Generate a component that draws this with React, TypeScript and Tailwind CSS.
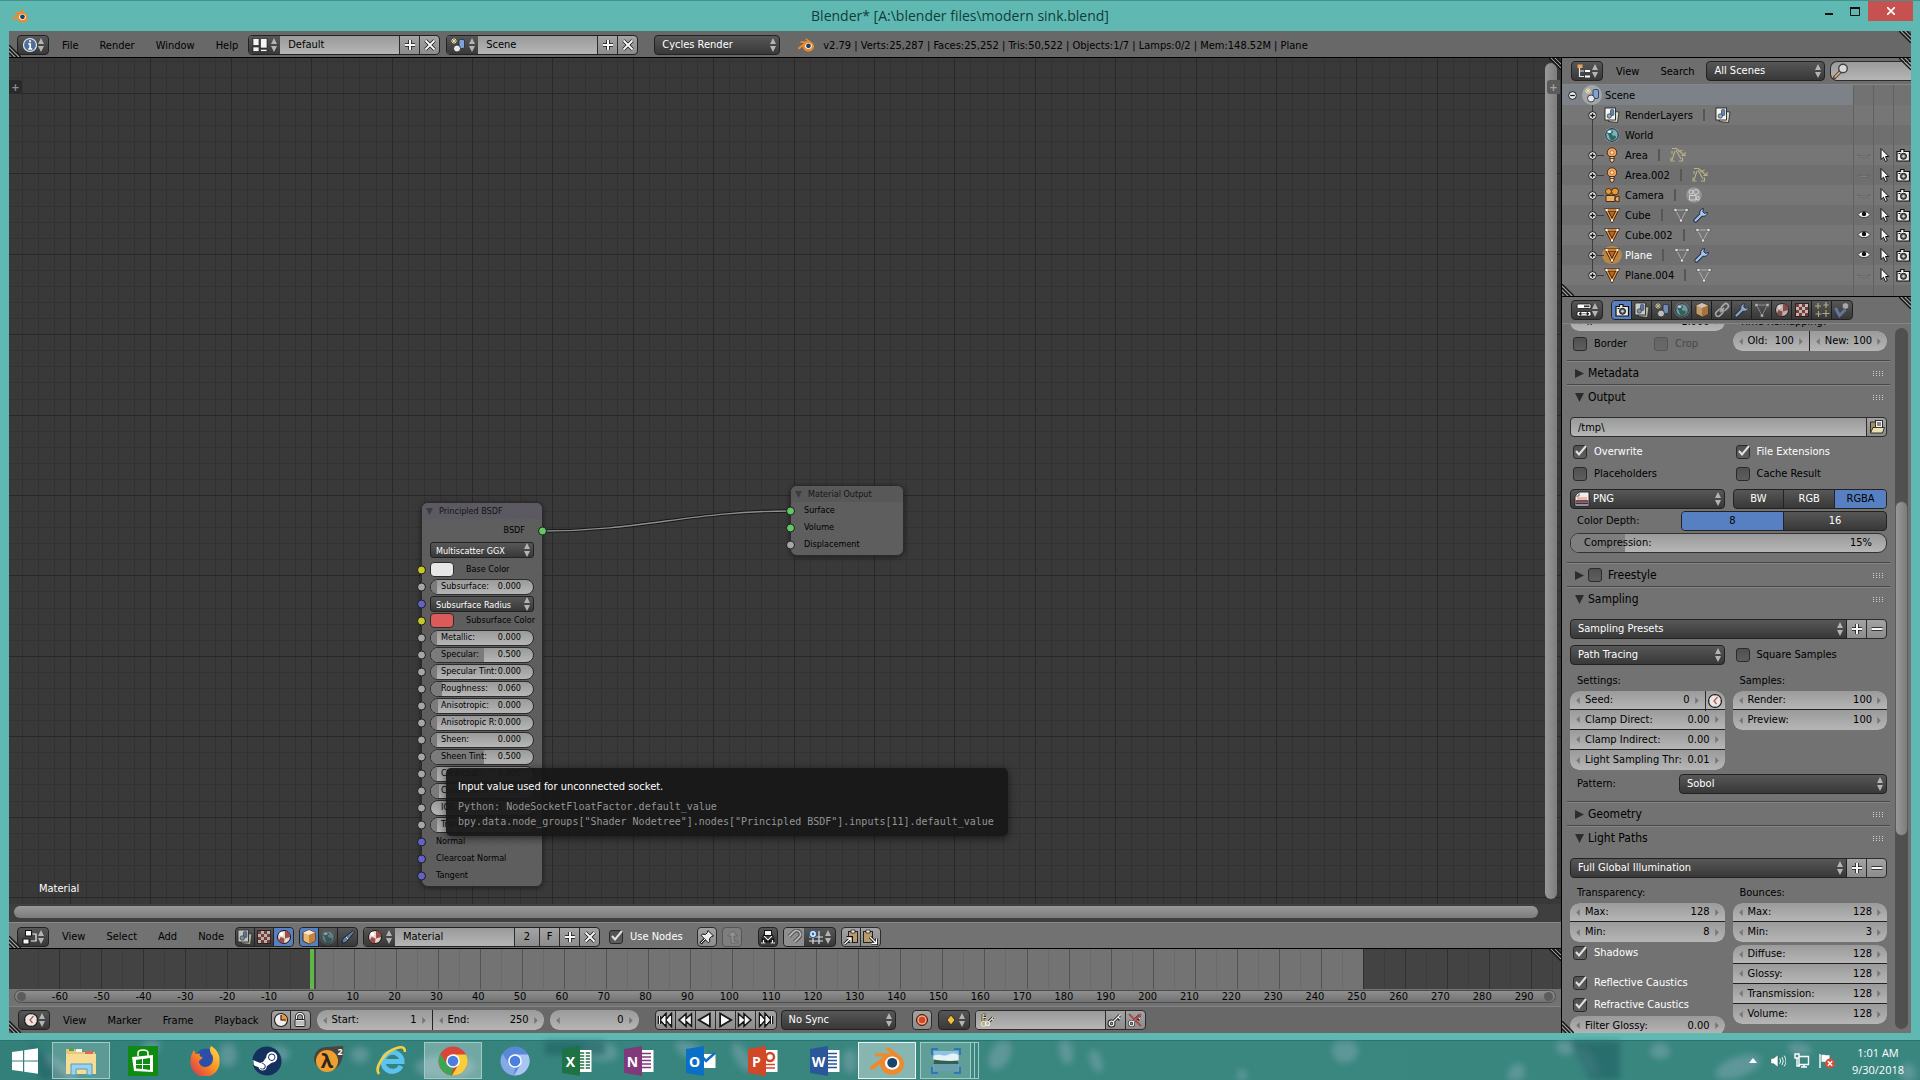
import React from "react";
import { SiBlender } from "react-icons/si";
import { FaSteam } from "react-icons/fa";

const UI = "font-['DejaVu_Sans_Condensed','DejaVu_Sans',sans-serif]";

/* ---------- icons ---------- */

const ICONS: Record<string, React.ReactNode> = {
  info: (
    <>
      <circle cx="8" cy="8" r="6.500" fill="#4f6f96" stroke="#dfe6ee" strokeWidth="1.200" />
      <path d="M8 3.300v1.900M6.200 7h2v5M6.200 12h4" stroke="#fff" strokeWidth="1.700" fill="none" />
    </>
  ),
  layout: <path d="M1 1.500h6v7H1zM1 10h6v4.500H1zM8.500 1.500H15V11H8.500zM8.500 12.300H15v2.200H8.500z" fill="#f4f4f4" stroke="#111" strokeWidth=".6" />,
  scene: (
    <>
      <path d="M4 1v6M1 4h6M2 2l4 4M6 2 2 6" stroke="#e6dfa0" strokeWidth="1" />
      <rect x="9" y="2.500" width="5.500" height="9" rx="1.500" fill="#7fa3d8" stroke="#1d2a40" strokeWidth=".8" />
      <circle cx="7" cy="11.500" r="3.500" fill="#e8e8e8" stroke="#222" strokeWidth=".8" />
    </>
  ),
  tree: (
    <>
      <path d="M3.500 4v9.500H8M3.500 8H8" stroke="#e8e8e8" strokeWidth="1.200" fill="none" />
      <rect x="1.500" y="1.500" width="5" height="3.500" fill="#e8a860" />
      <path d="M9 7h5v2H9zM9 12.500h5v2H9z" fill="#fff" />
    </>
  ),
  search: (
    <>
      <path d="M1.500 14.500 7 9" stroke="#5a3a20" strokeWidth="3.200" strokeLinecap="round" />
      <path d="M2 14 6.500 9.500" stroke="#e0b890" strokeWidth="1.600" strokeLinecap="round" />
      <circle cx="10" cy="5.500" r="4.300" fill="#d8d8d8" stroke="#444" strokeWidth="1.400" />
    </>
  ),
  layers: (
    <>
      <path d="m5 4 10 1-1.500 10.500-9-1z" fill="#d9d9c8" stroke="#222" strokeWidth=".8" />
      <rect x="1" y="1" width="10.500" height="12" fill="#f7f7ef" stroke="#222" strokeWidth=".9" />
      <rect x="6.500" y="2.500" width="3.300" height="6" rx="1" fill="#5d84bf" stroke="#234" strokeWidth=".6" />
      <circle cx="5.300" cy="9" r="2.200" fill="#9ab" stroke="#234" strokeWidth=".7" />
    </>
  ),
  world: (
    <>
      <circle cx="8" cy="8" r="7.600" fill="#8fa8b5" opacity=".7" />
      <circle cx="8" cy="8" r="6.300" fill="#7fb0c4" stroke="#16242e" strokeWidth="1" />
      <path d="M3 6c2-3 5-3 6-2s-2 3-1 4 4 0 4 2-3 4-5 3-1-4-4-7Z" fill="#2f6b5c" />
      <ellipse cx="5.500" cy="4.800" rx="2" ry="1.200" fill="#e4f3f6" />
    </>
  ),
  lamp: (
    <>
      <circle cx="8" cy="5.500" r="4.700" fill="#f0a860" stroke="#442408" strokeWidth=".9" />
      <circle cx="8" cy="5.500" r="1.900" fill="#fde3c0" stroke="#b06a28" strokeWidth=".8" />
      <path d="M6 9.500h4v4.500l-2 1.500-2-1.500z" fill="#e9d0b0" stroke="#442408" strokeWidth=".9" />
      <path d="M6 11.500h4" stroke="#442408" strokeWidth=".8" />
    </>
  ),
  lampData: (
    <g stroke="#b9b384" fill="none" strokeWidth="1.100">
      <path d="M2 1.500h5M7 2l7 6M6 3l5 9M5 4l-3 9M2 4v3" />
      <path d="M1 10.500v3.500h3.500M9 14h3.500v-3.500M11.500 8.500H15V5M8.500 5l4-2" />
    </g>
  ),
  camera: (
    <>
      <circle cx="4.500" cy="4.500" r="3" fill="#e8963c" stroke="#3c2206" strokeWidth=".9" />
      <circle cx="11" cy="4.500" r="3.500" fill="#e8963c" stroke="#3c2206" strokeWidth=".9" />
      <path d="M2 8.500h9v6H2zM11 10.500l4-1.500v6l-4-1.500z" fill="#efae66" stroke="#3c2206" strokeWidth=".9" />
    </>
  ),
  cameraData: (
    <>
      <circle cx="8" cy="8" r="7.800" fill="#959595" />
      <g fill="none" stroke="#d8d8d8" strokeWidth=".9">
        <circle cx="5" cy="5" r="2" />
        <circle cx="10" cy="5" r="2.500" />
        <path d="M3.500 8.500h6.500v4.500H3.500zM10 10.300l3-1v4l-3-1z" />
      </g>
    </>
  ),
  mesh: (
    <>
      <path d="M2.500 3h11L8 13.500z" fill="#b5682a" stroke="#3c2206" strokeWidth="3" />
      <path d="M2.500 3h11L8 13.500z" fill="none" stroke="#f3a052" strokeWidth="1.300" />
      <path d="M1.500 2h2v2h-2zM12.500 2h2v2h-2zM7 12.500h2v2H7z" fill="#fff" />
    </>
  ),
  meshData: (
    <>
      <path d="M2.500 3h11L8 13.500z" fill="none" stroke="#c6c6c6" strokeWidth="1" opacity=".7" />
      <path d="M1 1.500h3v3H1zM12 1.500h3v3h-3zM6.500 12h3v3h-3z" fill="#dcdcdc" stroke="#444" strokeWidth=".5" />
    </>
  ),
  wrench: (
    <>
      <path d="M2.500 13.500 9 7" stroke="#1c2c48" strokeWidth="4.200" strokeLinecap="round" />
      <path d="M14.500 5.500A4 4 0 0 1 8 8.500 4 4 0 0 1 10.500 1.500L9.800 4.800l1.500 1.500z" fill="#a9c4ee" stroke="#1c2c48" strokeWidth="1" />
      <path d="M2.500 13.500 9.500 6.500" stroke="#a9c4ee" strokeWidth="2.300" strokeLinecap="round" />
    </>
  ),
  eye: (
    <>
      <path d="M2 7.500c3-4 9-4 12 0-2.500 4.200-9.500 4.200-12 0Z" fill="#f2f2f2" stroke="#2a2a2a" strokeWidth=".9" />
      <circle cx="8" cy="7" r="2.200" fill="#111" />
    </>
  ),
  eyeClosed: <path d="M2 7.500c3 2 9 2 12 0-2 4-10 4.500-12 0Z" fill="#8e8e8e" stroke="#5a5a5a" strokeWidth=".7" />,
  cursor: <path d="M5 1.500v11l2.500-2.300 1.800 4.300 2-.9-1.800-4.100h3.300z" fill="#f4f4f4" stroke="#111" strokeWidth="1" />,
  photo: (
    <>
      <path d="M2 4.500h3.500V2.500h3.500v2h5.500V14H2z" fill="#e9e9e9" stroke="#111" strokeWidth="1.200" />
      <circle cx="8.500" cy="9.300" r="3" fill="#666" stroke="#111" strokeWidth="1" />
      <circle cx="8.500" cy="9.300" r="1.200" fill="#d5d5d5" />
      <path d="M3.500 6.500h2" stroke="#111" />
    </>
  ),
  props: (
    <>
      <rect x="1" y="2" width="14" height="4.500" rx="1.500" fill="#fff" stroke="#111" strokeWidth=".8" />
      <path d="M8 4.300h5.500" stroke="#333" strokeWidth="1.800" />
      <rect x="1" y="9.500" width="14" height="4.500" rx="1.500" fill="#fff" stroke="#111" strokeWidth=".8" />
      <path d="M5 10.200 3 11.800l2 1.500zM11 10.200l2 1.600-2 1.500zM5 11.800h6" fill="#111" stroke="#111" strokeWidth=".6" />
    </>
  ),
  cube: (
    <>
      <path d="m8 1 6 2.500v8.500l-6 3-6-3V3.500z" fill="#e8b878" stroke="#3c2206" strokeWidth=".9" />
      <path d="m8 1 6 2.500L8 6 2 3.500z" fill="#fbe9cf" />
      <path d="M8 6v9l6-3V3.500z" fill="#c88238" />
    </>
  ),
  link: (
    <g transform="rotate(-45 8 8)" fill="none" stroke="#c5c5c5" strokeWidth="1.700">
      <rect x="0" y="5.500" width="8" height="5" rx="2.500" />
      <rect x="8" y="5.500" width="8" height="5" rx="2.500" />
      <path d="M5 8h6" />
    </g>
  ),
  material: (
    <>
      <circle cx="8" cy="8" r="6.500" fill="#e6d5d2" stroke="#1a1010" strokeWidth="1" />
      <path d="M9 1.800A6.300 6.300 0 0 1 14.200 8L9 9.500zM8.500 9.500 8 14.300A6.300 6.300 0 0 1 2.800 11.500L4.500 8z" fill="#9c4e46" />
      <ellipse cx="5.500" cy="5" rx="2.200" ry="1.900" fill="#fff" />
    </>
  ),
  checker: (
    <>
      <rect x="1.500" y="1.500" width="13" height="13" fill="#eadfda" stroke="#2a1512" strokeWidth="1" />
      <path d="M2 2h3v3H2zM8 2h3v3H8zM5 5h3v3H5zM11 5h3v3h-3zM2 8h3v3H2zM8 8h3v3H8zM5 11h3v3H5zM11 11h3v3h-3z" fill="#8b3a34" />
    </>
  ),
  particles: <path d="M4 1v6M1 4h6M12 0v6M9.500 3h5M4.500 9v6M1.500 12h6M12 8v7M8.500 11.500h7" stroke="#d9cd9a" strokeWidth="1.100" />,
  physics: (
    <>
      <path d="m1.500 6 4 7.500 6-6" stroke="#6c87bd" strokeWidth="3" fill="none" />
      <circle cx="11.500" cy="4" r="3.300" fill="#c5c5cf" stroke="#333" strokeWidth=".6" />
    </>
  ),
  folder: (
    <>
      <path d="M1.500 3h5l1 1.500h6v9h-12z" fill="#a58f55" stroke="#222" strokeWidth=".9" />
      <rect x="6.500" y="1.500" width="7" height="8" fill="#f5f5f5" stroke="#222" strokeWidth=".9" />
      <path d="M8 4h4M8 6h4" stroke="#222" />
      <path d="M1.500 14 4 8.500h11.500l-2 5.500z" fill="#eadfae" stroke="#222" strokeWidth=".9" />
    </>
  ),
  image: (
    <>
      <path d="M5 1h10v14H1V5z" fill="#f3ebe6" stroke="#222" strokeWidth=".9" />
      <path d="M1 5h4V1z" fill="#fff" stroke="#222" strokeWidth=".7" />
      <path d="M3 6h10v3H3z" fill="#e2bcb0" />
      <path d="M1.500 9h13v2.500h-13z" fill="#8a4a4a" />
      <path d="M1.500 11.500h13v2h-13z" fill="#31345e" />
    </>
  ),
  clock: (
    <>
      <circle cx="8" cy="8" r="6.500" fill="#efe6e4" stroke="#1b1b1b" strokeWidth="1.100" />
      <path d="M10.500 4 7 8l2.500 3" stroke="#a8554d" strokeWidth="1.200" fill="none" />
      <path d="M8 2v1M8 13v1M2 8h1M13 8h1" stroke="#555" strokeWidth=".8" />
    </>
  ),
  clockOrange: (
    <>
      <circle cx="8" cy="8" r="6.500" fill="#f2eeee" stroke="#1b1b1b" strokeWidth="1.100" />
      <path d="M8 8V2a6 6 0 0 1 5.500 8z" fill="#e8953c" />
      <path d="M8 3v5h4.500" stroke="#222" strokeWidth="1.200" fill="none" />
    </>
  ),
  lock: (
    <>
      <path d="M4.500 8V5a3.500 3.500 0 0 1 7 0v3" fill="none" stroke="#222" strokeWidth="3" />
      <path d="M4.500 8V5a3.500 3.500 0 0 1 7 0v3" fill="none" stroke="#f2f2f2" strokeWidth="1.300" />
      <rect x="3" y="7.500" width="10" height="7" rx="1" fill="#e2e2e2" stroke="#222" strokeWidth="1" />
      <path d="M4 10h8M4 12h8" stroke="#888" strokeWidth=".8" />
    </>
  ),
  nodes: (
    <>
      <rect x="3.500" y="1.500" width="6" height="5.500" fill="#f4f4f4" stroke="#111" />
      <rect x="1" y="10" width="6" height="5" fill="#f4f4f4" stroke="#111" />
      <path d="M10.500 5h3.500v7H9" stroke="#f4f4f4" strokeWidth="1.200" fill="none" />
    </>
  ),
  brush: (
    <>
      <path d="M2 14c0-3 1-5 3-6l8-6.500 1.500 1.500L8 11c-1.500 2-3 3-6 3Z" fill="#5a7fa6" stroke="#111" strokeWidth=".8" />
      <path d="m6 8 2 2" stroke="#ddd" />
    </>
  ),
  pin: (
    <>
      <path d="M1.500 14.500 6 10" stroke="#111" strokeWidth="2.600" />
      <path d="m9 1.500 5.500 5.500-2 .5-2 2 .3 3-1.500 1.200-7-7L3.500 5l3 .5 2-2z" fill="#ececec" stroke="#111" strokeWidth="1" />
      <path d="M2 14 6 10" stroke="#fff" strokeWidth="1" />
    </>
  ),
  parent: <path d="M7 14V7H3.500L8.500 2l5 5H10v5h4v2z" fill="#929292" stroke="#666" strokeWidth="1" />,
  autoOffset: (
    <>
      <path d="M3 6.500 8 11l5-4.500M3 15v-4l2.500 2L8 11l2.500 2 2.500-2v4" fill="none" stroke="#111" strokeWidth="2.600" />
      <path d="M4 7 8 11l4-4M1 14h4.500M10.500 14H15M3.500 11v3M12.500 11v3" fill="none" stroke="#eee" strokeWidth="1.200" />
      <rect x="4.500" y="1.500" width="7" height="5" fill="#f2f2f2" stroke="#111" />
    </>
  ),
  magnet: (
    <>
      <path d="M3 7.500 8 2.500a3.900 3.900 0 0 1 5.500 5.500l-5 5" fill="none" stroke="#444" strokeWidth="3.600" />
      <path d="M3 7.500 8 2.500a3.900 3.900 0 0 1 5.500 5.500l-5 5" fill="none" stroke="#b5b5b5" strokeWidth="1.800" />
    </>
  ),
  snapGrid: (
    <>
      <path d="M5 4v11M11 2v13M1 8h14M1 12h14" stroke="#e0e0e0" strokeWidth="1.200" />
      <circle cx="5" cy="5" r="3.500" fill="#e9f1fa" stroke="#2e5d96" strokeWidth="1.200" />
      <circle cx="5" cy="5" r="1.400" fill="#2f6cb5" />
    </>
  ),
  copy: (
    <>
      <rect x="5.500" y="2.500" width="9" height="11" fill="#b89a6c" stroke="#222" />
      <path d="M8 1h4v3H8z" fill="#eee" stroke="#222" strokeWidth=".8" />
      <path d="m1.500 15 5-5M3.500 8.500h5v5" fill="none" stroke="#111" strokeWidth="3" />
      <path d="m1.500 15 6.500-6M3.500 9h4.500v4.500" fill="none" stroke="#fff" strokeWidth="1.400" />
    </>
  ),
  paste: (
    <>
      <rect x="1.500" y="2.500" width="9" height="11" fill="#b89a6c" stroke="#222" />
      <path d="M4 1h4v3H4z" fill="#eee" stroke="#222" strokeWidth=".8" />
      <path d="m8 8 6 6M9.500 14.500h5v-5" fill="none" stroke="#111" strokeWidth="3" />
      <path d="m8 8 6 6M9.500 14.500h5v-5" fill="none" stroke="#fff" strokeWidth="1.300" />
    </>
  ),
  plus: <path d="M8 3v10M3 8h10" stroke="#f6f6f6" strokeWidth="2" />,
  cross: <path d="m3.500 3.500 9 9M12.500 3.500l-9 9" stroke="#f6f6f6" strokeWidth="2" />,
  minus: <path d="M2.500 8h11" stroke="#f6f6f6" strokeWidth="2" />,
  first: <path d="M2.500 4v8M8 4 4.500 8 8 12zM13.500 4 10 8l3.500 4z" fill="#f6f6f6" stroke="#f6f6f6" strokeWidth="1" />,
  rewind: <path d="M8 4 3.500 8 8 12zM13.500 4 9 8l4.500 4z" fill="#f6f6f6" stroke="#f6f6f6" strokeWidth=".6" />,
  playBack: <path d="M12 3 3.500 8l8.500 5z" fill="#f6f6f6" />,
  play: <path d="M4 3 12.500 8 4 13z" fill="#f6f6f6" />,
  forward: <path d="M8 4l4.500 4L8 12zM2.500 4 7 8l-4.500 4z" fill="#f6f6f6" stroke="#f6f6f6" strokeWidth=".6" />,
  last: <path d="M13.500 4v8M8 4l3.500 4L8 12zM2.500 4 6 8l-3.500 4z" fill="#f6f6f6" stroke="#f6f6f6" strokeWidth="1" />,
  record: (
    <>
      <circle cx="8" cy="8" r="5.500" fill="#dc6a42" stroke="#4a160a" strokeWidth="1" />
      <circle cx="8" cy="8" r="4" fill="#cf4a24" stroke="#f6c4a8" strokeWidth=".9" />
    </>
  ),
  diamond: <path d="m8 3 4 5-4 5-4-5z" fill="#f0bd48" stroke="#3a2c08" strokeWidth=".9" />,
  keySet: (
    <>
      <path d="M4 2v9M4 3h3M4 5.500h3" stroke="#222" strokeWidth="2.600" />
      <path d="m9 10.500 5-5" stroke="#222" strokeWidth="3" />
      <path d="M4 2v9M4 3h3M4 5.500h3M9 10.500l5-5M12.500 6l2 2" stroke="#f0e6b0" strokeWidth="1.200" />
      <circle cx="4.500" cy="12" r="2.300" fill="none" stroke="#e8d98e" strokeWidth="1.300" />
      <circle cx="8.500" cy="11.500" r="2" fill="none" stroke="#f0f0f0" strokeWidth="1.200" />
    </>
  ),
  key: (
    <>
      <path d="m6 10 7-7M10 5l3 3" stroke="#222" strokeWidth="3" />
      <circle cx="4.500" cy="11.500" r="2.500" fill="none" stroke="#222" strokeWidth="3" />
      <path d="m6 10 7.500-7.500M11 5l2.500 2.500" stroke="#eee" strokeWidth="1.300" />
      <circle cx="4.500" cy="11.500" r="2.300" fill="none" stroke="#eee" strokeWidth="1.300" />
    </>
  ),
  keyDel: (
    <>
      <path d="m6 10 7-7M10 5l3 3" stroke="#222" strokeWidth="3" />
      <circle cx="4.500" cy="11.500" r="2.300" fill="none" stroke="#222" strokeWidth="2.600" />
      <path d="m6 10 7.500-7.500M11 5l2.500 2.500" stroke="#eee" strokeWidth="1.300" />
      <circle cx="4.500" cy="11.500" r="2.300" fill="none" stroke="#eee" strokeWidth="1.300" />
      <path d="m2 2 12 12M14 2 9 7" stroke="#b04545" strokeWidth="1.800" />
    </>
  ),
};

const OUTLINED = ["plus", "cross", "minus", "first", "rewind", "playBack", "play", "forward", "last"];

function Icon({ name }: { name: string }) {
  return (
    <svg viewBox="0 0 16 16" width="16" height="16" className="shrink-0" aria-hidden="true">
      {OUTLINED.includes(name) && (
        <g className="[&_path]:stroke-[#161616] [&_path]:[stroke-width:3.5] [&_path]:fill-[#161616]">{ICONS[name]}</g>
      )}
      {ICONS[name]}
    </svg>
  );
}

function BlenderLogo({ size }: { size: number }) {
  return (
    <svg viewBox="0 0 24 24" width={size} height={size} className="shrink-0" aria-hidden="true">
      <circle cx="15.700" cy="13.500" r="6" fill="#fff" />
      <SiBlender size={24} color="#ef8a2c" />
      <circle cx="15.700" cy="13.300" r="3.500" fill="#16466f" />
    </svg>
  );
}

/* ---------- basic widgets ---------- */

function UpDown({ className = "" }: { className?: string }) {
  return (
    <svg viewBox="0 0 8 14" width="6" height="14" preserveAspectRatio="none" className={`pointer-events-none shrink-0 ${className}`} aria-hidden="true">
      <path d="M4 0 8 6H0zM4 14 8 8H0z" fill="#b4b4b4" />
    </svg>
  );
}

const DARK = "bg-linear-to-b from-[#575757] to-[#383838] border border-[#222222]";
const LIGHT = "bg-linear-to-b from-[#a3a3a3] to-[#8c8c8c] border border-[#2c2c2c]";
const NUM = "bg-linear-to-b from-[#9a9a9a] to-[#b6b6b6]";

function EditorButton({ icon, label }: { icon: string; label: string }) {
  return (
    <button aria-label={label} className={`flex h-5 w-8 shrink-0 items-center justify-between rounded px-1 ${DARK}`}>
      <Icon name={icon} />
      <UpDown />
    </button>
  );
}

function Menus({ items }: { items: string[] }) {
  return (
    <nav className="ml-[3px] flex gap-px">
      {items.map((item) => (
        <button key={item} className="px-[10px] pt-[2px] text-black">{item}</button>
      ))}
    </nav>
  );
}

function Dropdown({ value, label, className = "", selectClass = "pl-[7px]" }: { value: string; label: string; className?: string; selectClass?: string }) {
  return (
    <div className={`relative flex h-5 items-center ${DARK} ${className}`}>
      <select aria-label={label} className={`h-full w-full appearance-none bg-transparent pt-px pr-3 text-white outline-none ${selectClass}`}>
        <option>{value}</option>
      </select>
      <UpDown className="absolute right-[3px]" />
    </div>
  );
}

function IconButton({ icon, label, className = "" }: { icon: string; label: string; className?: string }) {
  return (
    <button aria-label={label} className={`flex h-5 w-5 shrink-0 items-center justify-center ${className}`}>
      <Icon name={icon} />
    </button>
  );
}

function DataBlock({ icon, value, label, children }: { icon: string; value: string; label: string; children?: React.ReactNode }) {
  return (
    <div className="flex h-5 overflow-hidden rounded border border-[#222222] bg-linear-to-b from-[#a3a3a3] to-[#8c8c8c]">
      <button aria-label={`Browse ${label}`} className="flex w-[31px] items-center justify-between bg-linear-to-b from-[#575757] to-[#383838] px-[3px]">
        <Icon name={icon} />
        <UpDown />
      </button>
      <input aria-label={label} defaultValue={value} className={`w-[119px] px-2 pt-px text-black outline-none ${NUM}`} />
      {children}
    </div>
  );
}

function Arrow({ right }: { right?: boolean }) {
  return (
    <svg viewBox="0 0 4 8" width="4" height="7" className="shrink-0" aria-hidden="true">
      <path d={right ? "M0 0l4 4-4 4z" : "M4 0 0 4l4 4z"} fill="#767676" />
    </svg>
  );
}

function NumField({ label, value, className = "", children }: { label: string; value: string; className?: string; children?: React.ReactNode }) {
  return (
    <div className={`flex h-5 min-w-0 ${NUM} ${className}`}>
      <label className="flex min-w-0 flex-1 items-center px-[6px] text-black">
        <Arrow />
        <span className="pt-px pl-[5px] whitespace-nowrap">{label}</span>
        <input defaultValue={value} aria-label={label || "Current frame"} className="min-w-0 flex-1 bg-transparent pt-px pr-[5px] text-right outline-none" />
        <Arrow right />
      </label>
      {children}
    </div>
  );
}

function FieldStack({ children }: { children: React.ReactNode }) {
  return (
    <div className="divide-y divide-[#222222] overflow-hidden rounded-[9px] ring-1 ring-[#333333] ring-inset [&>:first-child]:h-[19px]">
      {children}
    </div>
  );
}

function Check({ label, checked, disabled, className = "" }: { label: string; checked?: boolean; disabled?: boolean; className?: string }) {
  const tone = disabled ? "text-[#494949]" : checked ? "text-white" : "text-black";
  return (
    <label className={`flex h-[22px] items-center gap-[7px] pl-[3px] ${tone} ${className}`}>
      <span className={`relative flex h-[14px] w-[14px] ${disabled ? "opacity-40" : ""}`}>
        <input
          type="checkbox"
          defaultChecked={checked}
          disabled={disabled}
          className="peer h-[14px] w-[14px] appearance-none rounded-[3px] border border-[#2a2a2a] bg-linear-to-b from-[#505050] to-[#5e5e5e]"
        />
        <svg viewBox="0 0 14 14" width="14" height="14" className="pointer-events-none absolute inset-0 hidden overflow-visible peer-checked:block" aria-hidden="true">
          <path d="M3 6 6 9.500 13 1" fill="none" stroke="#e2e2e2" strokeWidth="2" />
        </svg>
      </span>
      <span className="pt-px">{label}</span>
    </label>
  );
}

function Corner({ className }: { className: string }) {
  return (
    <svg viewBox="0 0 12 12" width="12" height="12" className={`pointer-events-none absolute ${className}`} aria-hidden="true">
      <path d="M0 0 12 12M4 0l8 8M8 0l4 4" stroke="#161616" strokeWidth="1.300" />
      <path d="m2 0 10 10M6 0l6 6" stroke="#a5a5a5" strokeWidth=".9" />
    </svg>
  );
}

/* ---------- window chrome ---------- */

function TitleBar() {
  return (
    <header className="grid h-[31px] shrink-0 grid-cols-[1fr_auto_1fr] border-t border-[#44908b]">
      <div className="flex items-center pl-3"><BlenderLogo size={16} /></div>
      <h1 className="pt-1 font-['Open_Sans',sans-serif] text-[14px] leading-[22px] text-[#123c3a]">Blender* [A:\blender files\modern sink.blend]</h1>
      <div className="flex justify-end pr-[7px]">
        <button aria-label="Minimize" className="flex h-5 w-[26px] items-center justify-center">
          <svg width="10" height="10" viewBox="0 0 10 10"><path d="M1 7h8v2H1z" fill="#111" /></svg>
        </button>
        <button aria-label="Maximize" className="flex h-5 w-[26px] items-center justify-center">
          <svg width="10" height="9" viewBox="0 0 10 9"><path d="M.5 1h9v7.500h-9z" fill="none" stroke="#111" /><path d="M0 0h10v2H0z" fill="#111" /></svg>
        </button>
        <button aria-label="Close" className="flex h-5 w-[45px] items-center justify-center bg-[#c75050]">
          <svg width="8" height="8" viewBox="0 0 8 8"><path d="m0 0 8 8M8 0 0 8" stroke="#fff" strokeWidth="1.600" /></svg>
        </button>
      </div>
    </header>
  );
}

function InfoBar() {
  return (
    <div className="relative flex h-[27px] shrink-0 items-center border-b border-black bg-[#686868] pt-[2px] pl-2">
      <Corner className="bottom-0 left-0 rotate-180" />
      <Corner className="top-0 right-0" />
      <EditorButton icon="info" label="Editor type: Info" />
      <Menus items={["File", "Render", "Window", "Help"]} />
      <div className="flex gap-[6px]">
        <DataBlock icon="layout" value="Default" label="Screen layout">
          <IconButton icon="plus" label="Add screen" className="h-[18px] border-l border-[#2c2c2c]" />
          <IconButton icon="cross" label="Delete screen" className="h-[18px] border-l border-[#2c2c2c]" />
        </DataBlock>
        <DataBlock icon="scene" value="Scene" label="Scene">
          <IconButton icon="plus" label="Add scene" className="h-[18px] border-l border-[#2c2c2c]" />
          <IconButton icon="cross" label="Delete scene" className="h-[18px] border-l border-[#2c2c2c]" />
        </DataBlock>
      </div>
      <Dropdown value="Cycles Render" label="Render engine" className="ml-4 w-[126px] rounded" />
      <div className="ml-[18px] flex items-center gap-[9px] whitespace-nowrap text-black">
        <BlenderLogo size={16} />
        <span className="pt-[2px]">v2.79 | Verts:25,287 | Faces:25,252 | Tris:50,522 | Objects:1/7 | Lamps:0/2 | Mem:148.52M | Plane</span>
      </div>
    </div>
  );
}

/* ---------- node editor ---------- */

const GRID_STEP = 80.4 / 5;

function NodeGrid() {
  const lines = (count: number, origin: number) =>
    Array.from({ length: count }, (_, i) => ({ pos: Math.round(origin + (i - 5) * GRID_STEP), major: i % 5 === 0 }));
  const vertical = lines(110, 61);
  const horizontal = lines(60, 35);
  const draw = (major: boolean) => (
    <g stroke={major ? "#282828" : "#323232"} strokeWidth="1" shapeRendering="crispEdges">
      {vertical.filter((l) => l.major === major).map((l) => <line key={`v${l.pos}`} x1={l.pos + 0.5} x2={l.pos + 0.5} y1="0" y2="100%" />)}
      {horizontal.filter((l) => l.major === major).map((l) => <line key={`h${l.pos}`} y1={l.pos + 0.5} y2={l.pos + 0.5} x1="0" x2="100%" />)}
    </g>
  );
  return (
    <svg className="block h-full w-full bg-[#393939]" aria-hidden="true">
      {draw(false)}
      {draw(true)}
    </svg>
  );
}

function Socket({ color, side = "left" }: { color: string; side?: "left" | "right" }) {
  return (
    <span
      className={`absolute top-1/2 h-[9px] w-[9px] -translate-y-1/2 rounded-full border border-[#1c1c1c] ${side === "left" ? "-left-[5px]" : "-right-[5px]"}`}
      style={{ backgroundColor: color }}
    />
  );
}

const GREY = "#a6a6a6";
const YELLOW = "#c7c729";
const BLUE = "#6363c7";
const GREEN = "#63c763";

const SLIDERS: { label: string; value: string; fill: number }[] = [
  { label: "Metallic:", value: "0.000", fill: 6 },
  { label: "Specular:", value: "0.500", fill: 52 },
  { label: "Specular Tint:", value: "0.000", fill: 6 },
  { label: "Roughness:", value: "0.060", fill: 11 },
  { label: "Anisotropic:", value: "0.000", fill: 7 },
  { label: "Anisotropic R:", value: "0.000", fill: 6 },
  { label: "Sheen:", value: "0.000", fill: 6 },
  { label: "Sheen Tint:", value: "0.500", fill: 52 },
  { label: "Clearcoat:", value: "0.000", fill: 6 },
  { label: "Clearcoat R:", value: "0.030", fill: 8 },
  { label: "IOR:", value: "1.450", fill: 0 },
  { label: "Transmission:", value: "0.000", fill: 6 },
];

function NodeRow({ color, children }: { color: string; children: React.ReactNode }) {
  return (
    <div className="relative flex h-[17px] items-center px-2">
      <Socket color={color} />
      {children}
    </div>
  );
}

function NodeSlider({ label, value, fill }: { label: string; value: string; fill: number }) {
  return (
    <label className={`relative flex h-[16px] w-full items-center overflow-hidden rounded-[8px] border border-[#2c2c2c] pr-3 pl-[10px] ${NUM}`}>
      <span className="absolute inset-y-0 left-0 bg-[#7b7b7b]" style={{ width: `${fill}%` }} />
      <span className="relative whitespace-nowrap">{label}</span>
      <input defaultValue={value} aria-label={label} className="relative min-w-0 flex-1 bg-transparent text-right outline-none" />
    </label>
  );
}

function NodeTitle({ children, tint }: { children: string; tint: string }) {
  return (
    <div className={`flex h-4 items-center gap-[6px] rounded-t-[6px] pl-[4px] text-[#141414] ${tint}`}>
      <svg viewBox="0 0 8 8" width="7" height="7" aria-hidden="true"><path d="M0 0h8L4 8z" fill="#3c3c3c" /></svg>
      <span>{children}</span>
    </div>
  );
}

function PrincipledNode() {
  return (
    <section className="absolute top-[444px] left-[412px] w-[122px] rounded-[7px] border border-[#2b2b2b] bg-[#606060]/95 pb-[2px] text-[9px] leading-[15px] text-black shadow-[0_1px_5px_rgba(0,0,0,0.5)]">
      <NodeTitle tint="bg-[#5c5962]">Principled BSDF</NodeTitle>
      <div className="relative flex h-[23px] items-center justify-end pr-[17px]">
        BSDF
        <Socket color={GREEN} side="right" />
      </div>
      <div className="mb-[3px] flex px-2">
        <Dropdown value="Multiscatter GGX" label="Distribution" className="h-[16px] w-full rounded-[3px]" selectClass="pl-[5px]" />
      </div>
      <NodeRow color={YELLOW}>
        <button aria-label="Base Color" className="h-[15px] w-6 rounded border border-[#2c2c2c] bg-[#e7e7e7]" />
        <span className="pl-3 whitespace-nowrap">Base Color</span>
      </NodeRow>
      <NodeRow color={GREY}><NodeSlider label="Subsurface:" value="0.000" fill={6} /></NodeRow>
      <NodeRow color={BLUE}>
        <Dropdown value="Subsurface Radius" label="Subsurface Radius" className="h-[16px] w-full rounded-[3px]" selectClass="pl-[5px]" />
      </NodeRow>
      <NodeRow color={YELLOW}>
        <button aria-label="Subsurface Color" className="h-[15px] w-6 shrink-0 rounded border border-[#2c2c2c] bg-[#dc5a5a]" />
        <span className="pl-3 whitespace-nowrap">Subsurface Color</span>
      </NodeRow>
      {SLIDERS.map((s) => (
        <NodeRow key={s.label} color={GREY}><NodeSlider {...s} /></NodeRow>
      ))}
      {["Normal", "Clearcoat Normal", "Tangent"].map((name) => (
        <NodeRow key={name} color={BLUE}><span className="pl-[6px]">{name}</span></NodeRow>
      ))}
    </section>
  );
}

function OutputNode() {
  return (
    <section className="absolute top-[427px] left-[781px] w-[114px] rounded-[7px] border border-[#2b2b2b] bg-[#606060]/95 pb-[2px] text-[9px] leading-[15px] text-black shadow-[0_1px_5px_rgba(0,0,0,0.5)]">
      <NodeTitle tint="bg-[#585858]">Material Output</NodeTitle>
      <NodeRow color={GREEN}><span className="pl-[5px]">Surface</span></NodeRow>
      <NodeRow color={GREEN}><span className="pl-[5px]">Volume</span></NodeRow>
      <NodeRow color={GREY}><span className="pl-[5px]">Displacement</span></NodeRow>
    </section>
  );
}

function NodeCanvas() {
  return (
    <div className="relative min-h-0 flex-1 overflow-hidden bg-[#3f3f3f] pb-[18px]">
      <NodeGrid />
      <svg className="pointer-events-none absolute inset-0 h-full w-full" aria-hidden="true">
        <path d="M534 473C633 473 682 453 781 453" fill="none" stroke="#181818" strokeWidth="3.500" />
        <path d="M534 473C633 473 682 453 781 453" fill="none" stroke="#8e8e8e" strokeWidth="1.300" />
      </svg>
      <PrincipledNode />
      <OutputNode />
      <div role="tooltip" className="absolute top-[710px] left-[437px] rounded-[5px] bg-[#171717]/95 pt-[11px] pr-[14px] pb-[7px] pl-3 shadow-[0_2px_8px_rgba(0,0,0,0.6)]">
        <p className="h-5 text-[11px] leading-4 text-white">Input value used for unconnected socket.</p>
        <p className="font-['DejaVu_Sans_Mono',monospace] text-[10px] leading-[15px] whitespace-nowrap text-[#959595]">Python: NodeSocketFloatFactor.default_value</p>
        <p className="font-['DejaVu_Sans_Mono',monospace] text-[10px] leading-[15px] whitespace-nowrap text-[#959595]">bpy.data.node_groups["Shader Nodetree"].nodes["Principled BSDF"].inputs[11].default_value</p>
      </div>
      <span className="absolute bottom-[25px] left-[30px] text-[11px] text-white">Material</span>
      <button aria-label="Show tool shelf" className="absolute top-[22px] left-0 h-[14px] w-[13px] rounded-r-[3px] bg-[#2a2a2a] text-[11px] leading-[13px] font-bold text-[#8e8e8e]">+</button>
      <div className="absolute top-[5px] right-1 bottom-[23px] w-3 rounded-full bg-linear-to-r from-[#999999] to-[#7c7c7c]" />
      <button aria-label="Show properties" className="absolute top-[22px] right-[1px] h-[14px] w-[13px] rounded-l-[3px] bg-[#5b5b5b] text-[11px] leading-[13px] font-bold text-[#a5a5a5]">+</button>
      <div className="absolute right-[23px] bottom-1 left-[5px] h-3 rounded-full bg-linear-to-b from-[#999999] to-[#7c7c7c]" />
      <Corner className="top-0 right-0" />
    </div>
  );
}

function NodeHeader() {
  const seg = "h-[18px] w-[19px]";
  const on = "bg-[#5680c2]";
  return (
    <div className="relative flex h-[27px] shrink-0 items-center border-t border-b border-t-[#8a8a8a] border-b-black bg-[#727272] pt-[2px] pl-2">
      <Corner className="bottom-0 left-0 rotate-180" />
      <EditorButton icon="nodes" label="Editor type: Node Editor" />
      <Menus items={["View", "Select", "Add", "Node"]} />
      <div className={`ml-px flex divide-x divide-[#222222] overflow-hidden rounded ${DARK}`}>
        <IconButton icon="layers" label="Compositing" className={`${seg} [&>svg]:opacity-70`} />
        <IconButton icon="checker" label="Texture" className={`${seg} [&>svg]:opacity-70`} />
        <IconButton icon="material" label="Shader" className={`${seg} ${on}`} />
      </div>
      <div className={`ml-[5px] flex divide-x divide-[#222222] overflow-hidden rounded ${DARK}`}>
        <IconButton icon="cube" label="Object" className={`${seg} ${on}`} />
        <IconButton icon="world" label="World" className={`${seg} [&>svg]:opacity-50`} />
        <IconButton icon="brush" label="Line style" className={seg} />
      </div>
      <div className="ml-[5px]">
        <DataBlock icon="material" value="Material" label="Material">
          <button className="w-[25px] border-l border-[#2c2c2c] pt-px text-black">2</button>
          <button className="w-5 border-l border-[#2c2c2c] pt-px text-black">F</button>
          <IconButton icon="plus" label="New material" className="h-[18px] border-l border-[#2c2c2c]" />
          <IconButton icon="cross" label="Unlink material" className="h-[18px] border-l border-[#2c2c2c]" />
        </DataBlock>
      </div>
      <Check label="Use Nodes" checked className="ml-[6px]" />
      <IconButton icon="pin" label="Pin" className={`ml-[14px] rounded ${LIGHT}`} />
      <IconButton icon="parent" label="Go to parent" className="ml-[5px] rounded border border-[#555555] bg-[#7e7e7e]" />
      <IconButton icon="autoOffset" label="Auto-offset" className={`ml-4 rounded ${DARK}`} />
      <div className="ml-[5px] flex overflow-hidden rounded border border-[#222222] bg-linear-to-b from-[#575757] to-[#383838]">
        <IconButton icon="magnet" label="Snap" className="h-[18px] w-5 bg-[#8e8e8e]" />
        <button aria-label="Snap element" className="flex w-[31px] items-center justify-between px-1"><Icon name="snapGrid" /><UpDown /></button>
      </div>
      <div className={`ml-[5px] flex divide-x divide-[#2c2c2c] overflow-hidden rounded ${LIGHT}`}>
        <IconButton icon="copy" label="Copy nodes" className="h-[18px] w-[19px]" />
        <IconButton icon="paste" label="Paste nodes" className="h-[18px] w-[19px]" />
      </div>
    </div>
  );
}

/* ---------- timeline ---------- */

const FRAME_W = 4.206;
const frameX = (frame: number) => Math.round(302.5 + frame * FRAME_W);

function Timeline() {
  const marks = Array.from({ length: 73 }, (_, i) => -65 + i * 5);
  const labels = Array.from({ length: 36 }, (_, i) => -60 + i * 10);
  return (
    <div className="relative flex h-[58px] shrink-0 flex-col bg-[#727272]">
      <svg className="block h-10 w-full bg-[#434343]" aria-hidden="true">
        <rect x={frameX(1)} y="0" width={frameX(250) - frameX(1)} height="40" fill="#737373" />
        {marks.map((f) => (
          <rect key={f} x={frameX(f)} y="0" width="1" height="40" fill="#000" opacity={f % 10 === 0 ? 0.28 : 0.08} />
        ))}
        <rect x={frameX(0) - 2} y="0" width="4" height="40" fill="#5fb747" />
      </svg>
      <Corner className="top-0 right-0" />
      <div className="mx-[5px] mt-[1px] flex h-[13px] items-center justify-between rounded-full border border-[#4e4e4e] bg-linear-to-b from-[#8f8f8f] to-[#727272] px-[2px]">
        <span className="h-[9px] w-[9px] rounded-full bg-[#5c5c5c]" />
        <div className="-mr-px ml-[13px] grid flex-1 grid-cols-36 text-center text-[11px] leading-[13px] text-black">
          {labels.map((f) => (
            <span key={f}>{f}</span>
          ))}
        </div>
        <span className="h-[9px] w-[9px] rounded-full bg-[#5c5c5c]" />
      </div>
      <div className="mt-[3px] border-b border-[#848484]" />
    </div>
  );
}

const PLAYBACK: [string, string][] = [
  ["first", "Jump to start"],
  ["rewind", "Previous keyframe"],
  ["playBack", "Play reversed"],
  ["play", "Play"],
  ["forward", "Next keyframe"],
  ["last", "Jump to end"],
];

function TimelineHeader() {
  return (
    <div className="relative flex h-[26px] shrink-0 items-center bg-[#686868] pl-[9px]">
      <Corner className="bottom-0 left-0 rotate-180" />
      <EditorButton icon="clock" label="Editor type: Timeline" />
      <Menus items={["View", "Marker", "Frame", "Playback"]} />
      <div className={`ml-[2px] flex divide-x divide-[#2c2c2c] overflow-hidden rounded ${LIGHT}`}>
        <IconButton icon="clockOrange" label="Use preview range" className="h-[18px] w-[19px]" />
        <IconButton icon="lock" label="Lock time cursor" className="h-[18px] w-[19px]" />
      </div>
      <div className="ml-[6px] flex divide-x divide-[#222222] overflow-hidden rounded-[9px] ring-1 ring-[#333333] ring-inset">
        <NumField label="Start:" value="1" className="w-[116px]" />
        <NumField label="End:" value="250" className="w-[111px]" />
      </div>
      <div className="ml-[6px] overflow-hidden rounded-[9px] ring-1 ring-[#333333] ring-inset">
        <NumField label="" value="0" className="w-[89px]" />
      </div>
      <div className={`ml-4 flex divide-x divide-[#2c2c2c] overflow-hidden rounded ${LIGHT}`}>
        {PLAYBACK.map(([icon, label]) => (
          <IconButton key={icon} icon={icon} label={label} className="h-[18px] w-5" />
        ))}
      </div>
      <Dropdown value="No Sync" label="Sync mode" className="ml-1 w-[115px] rounded" />
      <IconButton icon="record" label="Auto keyframe" className={`ml-4 rounded ${LIGHT}`} />
      <div className="ml-[6px]"><EditorButton icon="diamond" label="Keyframe type" /></div>
      <div className={`ml-[5px] flex overflow-hidden rounded ${LIGHT}`}>
        <label className={`flex w-[129px] items-center pl-[3px] ${NUM}`}>
          <Icon name="keySet" />
          <input aria-label="Active keying set" className="min-w-0 flex-1 bg-transparent outline-none" />
        </label>
        <IconButton icon="key" label="Insert keyframe" className="h-[18px] border-l border-[#2c2c2c]" />
        <IconButton icon="keyDel" label="Delete keyframe" className="h-[18px] border-l border-[#2c2c2c]" />
      </div>
    </div>
  );
}

/* ---------- outliner ---------- */

interface OutlinerItem {
  name: string;
  icon: string;
  data: string[];
  visible?: boolean;
  active?: boolean;
}

const OBJECTS: OutlinerItem[] = [
  { name: "RenderLayers", icon: "layers", data: ["layers"] },
  { name: "World", icon: "world", data: [] },
  { name: "Area", icon: "lamp", data: ["lampData"], visible: false },
  { name: "Area.002", icon: "lamp", data: ["lampData"], visible: false },
  { name: "Camera", icon: "camera", data: ["cameraData"], visible: false },
  { name: "Cube", icon: "mesh", data: ["meshData", "wrench"], visible: true },
  { name: "Cube.002", icon: "mesh", data: ["meshData"], visible: true },
  { name: "Plane", icon: "mesh", data: ["meshData", "wrench"], visible: true, active: true },
  { name: "Plane.004", icon: "mesh", data: ["meshData"], visible: false },
];

function Expander({ open }: { open?: boolean }) {
  return (
    <svg viewBox="0 0 10 10" width="9" height="9" className="relative" aria-hidden="true">
      <circle cx="5" cy="5" r="4.300" fill="#eaeaea" stroke="#111" strokeWidth="1" />
      <path d={open ? "M2.500 5h5" : "M2.500 5h5M5 2.500v5"} stroke="#111" strokeWidth="1.400" />
    </svg>
  );
}

function Toggles({ item }: { item?: OutlinerItem }) {
  const shown = item?.visible !== undefined;
  const cell = "flex items-center justify-center border-l border-[#616161]";
  return (
    <>
      <span className={`${cell} w-5`}>{shown && <Icon name={item.visible ? "eye" : "eyeClosed"} />}</span>
      <span className={`${cell} w-5`}>{shown && <Icon name="cursor" />}</span>
      <span className={`${cell} w-[18px]`}>{shown && <Icon name="photo" />}</span>
    </>
  );
}

function Outliner() {
  return (
    <section className="relative flex h-[239px] shrink-0 flex-col border-b border-black bg-[#727272]">
      <Corner className="bottom-0 left-0 rotate-180" />
      <div className="flex h-[27px] shrink-0 items-center border-b border-[#858585] bg-[#6e6e6e] pl-[9px]">
        <EditorButton icon="tree" label="Editor type: Outliner" />
        <Menus items={["View", "Search"]} />
        <Dropdown value="All Scenes" label="Display mode" className="ml-[2px] w-[119px] rounded" />
        <label className={`ml-[5px] flex h-5 min-w-0 flex-1 items-center rounded-l-[7px] border border-r-0 border-[#2c2c2c] pl-[2px] ${NUM}`}>
          <Icon name="search" />
          <input aria-label="Filter" className="min-w-0 flex-1 bg-transparent outline-none" />
        </label>
      </div>
      <Corner className="top-0 right-0" />
      <ul className="flex flex-1 flex-col">
        <li className="flex h-5 bg-[#727272]">
          <div className="flex flex-1 items-center bg-[#7c8287] text-black">
            <span className="flex w-5 justify-center"><Expander open /></span>
            <span className="flex h-5 w-5 items-center justify-center rounded-full bg-[#a2a6a9]"><Icon name="scene" /></span>
            <span className="pt-[2px] pl-[3px]">Scene</span>
          </div>
          <Toggles />
        </li>
        {OBJECTS.map((item, i) => (
          <li key={item.name} className={`flex h-5 ${i % 2 ? "bg-[#6f6f6f]" : "bg-[#767676]"}`}>
            <div className="flex flex-1 items-center pl-5 text-black">
              <span className="relative flex h-5 w-5 items-center justify-center">
                <span className={`absolute top-0 left-[10px] w-px bg-[#3c3c3c] ${i === OBJECTS.length - 1 ? "h-[10px]" : "h-5"}`} />
                {i > 1 && <span className="absolute top-[10px] left-[10px] h-px w-[12px] bg-[#3c3c3c]" />}
                {item.name !== "World" && <Expander />}
              </span>
              <span className={`flex h-[18px] w-5 items-center justify-center rounded-full ${item.active ? "bg-[#b98745]" : ""}`}><Icon name={item.icon} /></span>
              <span className={`pt-[2px] pl-[3px] ${item.active ? "text-white" : ""}`}>{item.name}</span>
              {item.data.length > 0 && <span className="mr-2 ml-[10px] h-3 w-[2px] bg-[#565656]" />}
              {item.data.map((d) => (
                <span key={d} className="flex w-5 justify-center"><Icon name={d} /></span>
              ))}
            </div>
            <Toggles item={item} />
          </li>
        ))}
        <li className="flex flex-1 bg-[#6f6f6f]"><span className="flex-1" /><Toggles /></li>
      </ul>
    </section>
  );
}

/* ---------- properties ---------- */

const TABS: [string, string][] = [
  ["photo", "Render"],
  ["layers", "Render layers"],
  ["scene", "Scene"],
  ["world", "World"],
  ["cube", "Object"],
  ["link", "Constraints"],
  ["wrench", "Modifiers"],
  ["meshData", "Data"],
  ["material", "Material"],
  ["checker", "Texture"],
  ["particles", "Particles"],
  ["physics", "Physics"],
];

function Panel({ title, open, checkbox, className = "", children }: { title: string; open?: boolean; checkbox?: boolean; className?: string; children?: React.ReactNode }) {
  return (
    <section className="border-t border-[#484848]">
      <div className="flex h-[23px] items-center border-t border-[#868686] pr-[6px] pl-2 text-[12px] text-black">
        <svg viewBox="0 0 10 10" width="9" height="9" className="shrink-0" aria-hidden="true">
          <path d={open ? "M0 0h10L5 10z" : "M0 0l10 5-10 5z"} fill="#2c2c2c" />
        </svg>
        {checkbox && (
          <input type="checkbox" aria-label={title} className="ml-1 h-[14px] w-[14px] appearance-none rounded-[3px] border border-[#2a2a2a] bg-linear-to-b from-[#505050] to-[#5e5e5e]" />
        )}
        <h2 className={checkbox ? "pl-[6px]" : "pl-1"}>{title}</h2>
        <svg viewBox="0 0 11 6" width="11" height="6" className="mt-[2px] ml-auto" aria-hidden="true">
          {[0, 3, 6, 9].map((x) => [0, 2, 4].map((y) => <rect key={`${x}-${y}`} x={x} y={y} width="1" height="1" fill="#d0d0d0" />))}
        </svg>
      </div>
      {open && <div className={`px-[3px] pt-[9px] ${className}`}>{children}</div>}
    </section>
  );
}

function Presets({ value }: { value: string }) {
  return (
    <div className="flex">
      <Dropdown value={value} label="Presets" className="flex-1 rounded-l" />
      <IconButton icon="plus" label="Add preset" className={`-ml-px w-[21px] ${LIGHT}`} />
      <IconButton icon="minus" label="Remove preset" className={`-ml-px w-[21px] rounded-r ${LIGHT}`} />
    </div>
  );
}

function Properties() {
  return (
    <section className="relative flex min-h-0 flex-1 flex-col overflow-hidden bg-[#727272]">
      <div className="flex h-[27px] shrink-0 items-center border-b border-[#858585] bg-[#6e6e6e] pl-[9px]">
        <EditorButton icon="props" label="Editor type: Properties" />
        <div className={`ml-2 flex divide-x divide-[#1d1d1d] overflow-hidden rounded ${DARK}`}>
          {TABS.map(([icon, label], i) => (
            <IconButton key={label} icon={icon} label={label} className={`h-[18px] ${i === 0 ? "bg-[#5680c2]" : "[&>svg]:opacity-75"}`} />
          ))}
        </div>
      </div>
      <Corner className="top-0 right-0" />
      <Corner className="bottom-0 left-0 rotate-180" />
      <div className="flex min-h-0 flex-1 gap-[5px] overflow-hidden pr-[3px] pl-[5px]">
        <div className="min-w-0 flex-1">
          <div className="-mt-3 grid h-12 grid-cols-2 items-start gap-x-2 px-[3px]">
            <div>
              <FieldStack><NumField label="Y:" value="1.000" /></FieldStack>
              <div className="mt-[2px] grid grid-cols-[81px_1fr]">
                <Check label="Border" />
                <Check label="Crop" disabled />
              </div>
            </div>
            <div>
              <p className="h-[19px] pt-[2px] pl-[7px] text-black">Time Remapping:</p>
              <div className="grid grid-cols-2 divide-x divide-[#222222] overflow-hidden rounded-[9px] ring-1 ring-[#333333] ring-inset">
                <NumField label="Old:" value="100" />
                <NumField label="New:" value="100" />
              </div>
            </div>
          </div>
          <Panel title="Metadata" />
          <Panel title="Output" open className="pb-[9px]">
            <div className="flex">
              <input aria-label="Output path" defaultValue="/tmp\" className={`h-5 min-w-0 flex-1 rounded-l border border-[#2c2c2c] px-[7px] pt-px text-black outline-none ${NUM}`} />
              <IconButton icon="folder" label="Browse" className={`-ml-px w-[21px] rounded-r ${LIGHT}`} />
            </div>
            <div className="my-1 grid grid-cols-2 gap-x-2">
              <Check label="Overwrite" checked />
              <Check label="File Extensions" checked />
              <Check label="Placeholders" />
              <Check label="Cache Result" />
            </div>
            <div className="grid grid-cols-2 gap-x-2">
              <div className="relative">
                <Dropdown value="PNG" label="File format" className="rounded" selectClass="pl-[22px]" />
                <span className="pointer-events-none absolute top-[2px] left-1"><Icon name="image" /></span>
              </div>
              <div className={`grid h-5 grid-cols-3 divide-x divide-[#222222] overflow-hidden rounded text-white ${DARK}`}>
                <button className="pt-px">BW</button>
                <button className="pt-px">RGB</button>
                <button className="bg-[#5680c2] pt-px text-black">RGBA</button>
              </div>
            </div>
            <div className="mt-[2px] flex items-center">
              <span className="w-[111px] pt-px pl-[7px] text-black">Color Depth:</span>
              <div className={`grid h-5 flex-1 grid-cols-2 divide-x divide-[#222222] overflow-hidden rounded text-white ${DARK}`}>
                <button className="bg-[#5680c2] pt-px text-black">8</button>
                <button className="pt-px">16</button>
              </div>
            </div>
            <label className={`relative mt-[2px] flex h-5 items-center overflow-hidden rounded-[9px] border border-[#333333] pt-px pr-[14px] pl-[13px] text-black ${NUM}`}>
              <span className="absolute inset-y-0 left-0 bg-[#7e7e7e]" style={{ width: "17%" }} />
              <span className="relative">Compression:</span>
              <input defaultValue="15%" className="relative min-w-0 flex-1 bg-transparent text-right outline-none" />
            </label>
          </Panel>
          <Panel title="Freestyle" checkbox />
          <Panel title="Sampling" open className="pb-[7px]">
            <Presets value="Sampling Presets" />
            <div className="mt-[5px] grid grid-cols-2 items-center gap-x-2">
              <Dropdown value="Path Tracing" label="Integrator" className="rounded" />
              <Check label="Square Samples" className="h-5" />
            </div>
            <div className="mt-[5px] grid grid-cols-2 items-start gap-x-2">
              <p className="h-5 pl-[7px] leading-5 text-black">Settings:</p>
              <p className="h-5 pl-[7px] leading-5 text-black">Samples:</p>
              <FieldStack>
                <NumField label="Seed:" value="0"><IconButton icon="clock" label="Animate seed" className="border-l border-[#2c2c2c]" /></NumField>
                <NumField label="Clamp Direct:" value="0.00" />
                <NumField label="Clamp Indirect:" value="0.00" />
                <NumField label="Light Sampling Thr:" value="0.01" />
              </FieldStack>
              <FieldStack>
                <NumField label="Render:" value="100" />
                <NumField label="Preview:" value="100" />
              </FieldStack>
            </div>
            <div className="mt-1 flex items-center">
              <span className="w-[109px] pt-px pl-[7px] text-black">Pattern:</span>
              <Dropdown value="Sobol" label="Pattern" className="flex-1 rounded" />
            </div>
          </Panel>
          <Panel title="Geometry" />
          <Panel title="Light Paths" open>
            <Presets value="Full Global Illumination" />
            <div className="mt-[5px] grid grid-cols-2 items-start gap-x-2">
              <p className="h-5 pl-[7px] leading-5 text-black">Transparency:</p>
              <p className="h-5 pl-[7px] leading-5 text-black">Bounces:</p>
              <div>
                <FieldStack>
                  <NumField label="Max:" value="128" />
                  <NumField label="Min:" value="8" />
                </FieldStack>
                <Check label="Shadows" checked className="mb-2" />
                <Check label="Reflective Caustics" checked />
                <Check label="Refractive Caustics" checked />
                <FieldStack><NumField label="Filter Glossy:" value="0.00" /></FieldStack>
              </div>
              <div className="flex flex-col gap-[3px]">
                <FieldStack>
                  <NumField label="Max:" value="128" />
                  <NumField label="Min:" value="3" />
                </FieldStack>
                <FieldStack>
                  <NumField label="Diffuse:" value="128" />
                  <NumField label="Glossy:" value="128" />
                  <NumField label="Transmission:" value="128" />
                  <NumField label="Volume:" value="128" />
                </FieldStack>
              </div>
            </div>
          </Panel>
        </div>
        <div className="my-1 w-[13px] shrink-0 rounded-full bg-[#505050] pt-[173px]">
          <div className="h-[335px] rounded-full border border-[#5a5a5a] bg-linear-to-r from-[#999999] to-[#7c7c7c]" />
        </div>
      </div>
    </section>
  );
}

/* ---------- taskbar ---------- */

function OfficeIcon({ letter, color, kind }: { letter: string; color: string; kind: "grid" | "lines" | "mail" | "chart" }) {
  return (
    <svg viewBox="0 0 30 30" width="30" height="30" aria-hidden="true">
      <rect x="15" y={kind === "mail" ? 8 : 4} width="14.500" height={kind === "mail" ? 14 : 22} fill="#fff" />
      {kind === "mail" && <path d="m15 9 5 6 9-8" fill="none" stroke={color} strokeWidth="2.400" />}
      {kind === "grid" && <path d="M18 7h10M18 10h10M18 13h10M18 16h10M18 19h10M18 22h10" stroke={color} strokeWidth="1.600" />}
      {kind === "grid" && <path d="M23 5v20" stroke="#fff" strokeWidth="1.500" />}
      {kind === "lines" && <path d="M18 7.500h9M18 11h9M18 14.500h9M18 18h9M18 21.500h9" stroke={color} strokeWidth="1.600" />}
      {kind === "chart" && (
        <>
          <circle cx="22" cy="11" r="4" fill="none" stroke={color} strokeWidth="2.500" />
          <path d="M18 18.500h9M18 22h9" stroke={color} strokeWidth="1.600" />
        </>
      )}
      <path d="M0 3 18 0v30L0 27z" fill={color} />
      <text x="8.500" y="20.500" textAnchor="middle" fontFamily="Open Sans, sans-serif" fontWeight="700" fontSize="14" fill="#fff">{letter}</text>
    </svg>
  );
}

function ChromeIcon({ blue }: { blue?: boolean }) {
  const [a, b, c] = blue ? ["#5a88d8", "#a9c6f2", "#83a9e6"] : ["#d8453a", "#f7cf3c", "#3fa552"];
  return (
    <svg viewBox="0 0 30 30" width="30" height="30" aria-hidden="true">
      <circle cx="15" cy="15" r="14.500" fill={a} />
      <path d="M15 8.500h13A14.500 14.500 0 0 1 14 29.500l6.500-11z" fill={b} />
      <path d="M2.500 7.800 9.500 18.500 15 21.500l-1 8A14.500 14.500 0 0 1 2.500 7.800Z" fill={c} />
      <circle cx="15" cy="15" r="6.800" fill="#fff" />
      <circle cx="15" cy="15" r="5.300" fill="#4a7fe0" />
    </svg>
  );
}

const APPS: { name: string; frame?: string; narrow?: boolean; icon: React.ReactNode }[] = [
  {
    name: "File Explorer",
    frame: "border-[#a3c9c5] bg-white/20",
    icon: (
      <svg viewBox="0 0 32 30" width="32" height="30" aria-hidden="true">
        <path d="M1 3h9l2 3h18v22H1z" fill="#e6c877" />
        <path d="M4 2h5v3H4z" fill="#58a05a" />
        <path d="M11 3h6v3h-6z" fill="#f4f4f4" />
        <path d="M20 5h8v3h-8z" fill="#d9695a" />
        <path d="M1 8h30v20H1z" fill="#f5dd95" />
        <path d="M6 29V18h21v11h-5v-6H11v6z" fill="#9ad3ee" stroke="#4f9cc2" strokeWidth="1" />
      </svg>
    ),
  },
  {
    name: "Store",
    icon: (
      <svg viewBox="0 0 30 30" width="30" height="30" aria-hidden="true">
        <path d="M0 0h30v30H0z" fill="#0f8a12" />
        <path d="M10 10V7c0-4 10-4 10 0v3" fill="none" stroke="#fff" strokeWidth="1.500" />
        <path d="m4 11 21-2v17L6 25z" fill="#fff" />
        <path d="m8 14 6-1v5H8zM15 13l7-1v6h-7zM8 19h6v4l-6-.5zM15 19h7v5l-7-1z" fill="#0f8a12" />
      </svg>
    ),
  },
  {
    name: "Firefox",
    icon: (
      <svg viewBox="0 0 30 30" width="30" height="30" aria-hidden="true">
        <defs>
          <linearGradient id="fox" x1="1" y1="0" x2="0" y2="1">
            <stop offset="0" stopColor="#ffe14a" />
            <stop offset=".5" stopColor="#f98a20" />
            <stop offset="1" stopColor="#d52a5a" />
          </linearGradient>
        </defs>
        <circle cx="16" cy="13" r="10.500" fill="#2a4fa8" />
        <path d="M21 0c7 4 9 10 8.500 15.500A14.500 14.500 0 0 1 .5 17C0 11 2 7 4 4l1.500 4L10 7.500c-1 3 0 3 3 4l-4 3.500c0 5 5 7 9 5.500s6-6 4.500-11C20 7 19 3 21 0Z" fill="url(#fox)" />
      </svg>
    ),
  },
  {
    name: "Steam",
    icon: (
      <svg viewBox="0 0 30 30" width="30" height="30" aria-hidden="true">
        <circle cx="15" cy="15" r="13.500" fill="#fff" />
        <FaSteam size={30} color="#14305c" />
      </svg>
    ),
  },
  {
    name: "Half-Life 2",
    icon: (
      <svg viewBox="0 0 30 30" width="30" height="30" aria-hidden="true">
        <path d="M0 14C0 5 6 1 13 1l16-1c1 6 0 12-3 18a14 13 0 0 1-26-4Z" fill="#4a443c" />
        <circle cx="13" cy="15" r="11" fill="#f0a030" />
        <text x="13" y="22" textAnchor="middle" fontFamily="Open Sans, sans-serif" fontWeight="700" fontSize="20" fill="#2b2620">λ</text>
        <text x="26" y="9" textAnchor="middle" fontFamily="Open Sans, sans-serif" fontWeight="700" fontSize="9" fill="#fff">2</text>
      </svg>
    ),
  },
  {
    name: "Internet Explorer",
    icon: (
      <svg viewBox="0 0 30 30" width="30" height="30" aria-hidden="true">
        <path d="M25 20A9.500 9.500 0 1 1 26 15.500H8" fill="none" stroke="#5cc3f0" strokeWidth="5" />
        <path d="M3 28C-2 22 8 8 16 4s13-4 13 2" fill="none" stroke="#f2cf45" strokeWidth="2.600" />
      </svg>
    ),
  },
  { name: "Chrome", frame: "border-[#a3c9c5] bg-white/30", icon: <ChromeIcon /> },
  { name: "Chromium", icon: <ChromeIcon blue /> },
  { name: "Excel", icon: <OfficeIcon letter="X" color="#1f7244" kind="grid" /> },
  { name: "OneNote", icon: <OfficeIcon letter="N" color="#80397b" kind="lines" /> },
  { name: "Outlook", icon: <OfficeIcon letter="O" color="#0a6fc8" kind="mail" /> },
  { name: "PowerPoint", icon: <OfficeIcon letter="P" color="#d24726" kind="chart" /> },
  { name: "Word", icon: <OfficeIcon letter="W" color="#2a579a" kind="lines" /> },
  { name: "Blender", frame: "border-[#e8f4f2] bg-white/40", icon: <BlenderLogo size={34} /> },
  {
    name: "Photos",
    frame: "border-[#a3c9c5] bg-white/20",
    narrow: true,
    icon: (
      <svg viewBox="0 0 30 26" width="30" height="26" aria-hidden="true">
        <path d="M2.500 3h25v20h-25z" fill="#8fc0e6" />
        <path d="M2.500 8c6-3 10 1 14-1s7-2 11 0v7h-25z" fill="#e6f2f8" />
        <path d="M2.500 11.500c6 1 16 2 25 1V16h-25z" fill="#2f6350" />
        <path d="M2.500 16h25v7h-25z" fill="#6a9fb2" />
        <path d="M1 7V1h6M23 1h6v6M29 19v6h-6M7 25H1v-6" fill="none" stroke="#2f78b8" strokeWidth="2" />
      </svg>
    ),
  },
];

const PETALS = [
  [60, 30, 22, 8, 40], [150, 8, 8, 14, 30], [228, 14, 9, 12, 0], [280, 12, 10, 7, 20], [360, 14, 9, 8, 0],
  [445, 26, 30, 12, 0], [600, 10, 18, 10, 10], [690, 10, 16, 8, 30], [742, 16, 16, 7, 60], [850, 20, 7, 12, 0],
  [1000, 14, 16, 10, 120], [1066, 10, 7, 14, -10], [1096, 20, 6, 12, -20], [1242, 36, 5, 8, 0], [1345, 10, 13, 12, 0],
  [1516, 34, 8, 12, 20], [1566, 6, 10, 8, 0], [1588, 20, 7, 17, -30], [1660, 10, 10, 8, 0], [1738, 26, 24, 10, -20],
  [1800, 8, 12, 6, 10], [1908, 32, 8, 10, 0],
];

function Taskbar() {
  return (
    <footer className="relative flex h-10 shrink-0 items-center border-t border-[#2b7570] bg-linear-to-r from-[#33807b] via-[#39877f] to-[#39867f]">
      <svg className="pointer-events-none absolute inset-0 h-full w-full blur-[3px]" aria-hidden="true">
        {PETALS.map(([x, y, rx, ry, r], i) => (
          <ellipse key={i} cx={x} cy={y} rx={rx} ry={ry} transform={`rotate(${r} ${x} ${y})`} fill="#83a7b4" opacity=".5" />
        ))}
        <path d="M30 0 70 40h-30zM545 0h60v14h-60zM1570 0h50v40h-30z" fill="#1e5f62" opacity=".6" />
      </svg>
      <button aria-label="Start" className="relative flex h-full w-[50px] items-center justify-center">
        <svg viewBox="0 0 26 26" width="26" height="26" aria-hidden="true">
          <path d="m0 4 11-1.600V12.500H0zM12.200 2.200 26 .3v12.200H12.200zM0 13.600h11v10L0 22zM12.200 13.600H26v12.100l-13.800-1.900z" fill="#fff" />
        </svg>
      </button>
      <nav className="relative flex h-full">
        {APPS.map((app) => (
          <div key={app.name} className={`flex px-[2px] py-px ${app.narrow ? "w-[55px]" : "w-[62px]"}`}>
            <button aria-label={app.name} className={`flex flex-1 items-center justify-center border ${app.frame ?? "border-transparent"}`}>{app.icon}</button>
          </div>
        ))}
        <span className="my-px -ml-[2px] w-1 border border-l-0 border-[#a3c9c5]" />
        <span className="my-px w-1 border border-l-0 border-[#a3c9c5]" />
      </nav>
      <div className="relative ml-auto flex items-center text-white">
        <svg viewBox="0 0 8 5" width="8" height="5" aria-hidden="true"><path d="M4 0 8 5H0z" fill="#fff" /></svg>
        <svg viewBox="0 0 18 16" width="16" height="16" className="ml-[13px]" aria-hidden="true">
          <path d="M1 5h3l5-4v14l-5-4H1z" fill="#fff" stroke="#1d4f4c" strokeWidth=".6" />
          <path d="M11 5q2 3 0 6M13.500 3.500q3 4.500 0 9M16 2q4 6 0 12" fill="none" stroke="#fff" strokeWidth="1" />
        </svg>
        <svg viewBox="0 0 16 16" width="16" height="16" className="ml-2" aria-hidden="true">
          <path d="M5 3.500h9.500v8H5zM7 14h6M10 12v2M3 5v8h3M1 1h4v4H1z" fill="none" stroke="#fff" strokeWidth="1.400" />
        </svg>
        <svg viewBox="0 0 18 16" width="18" height="16" className="ml-2" aria-hidden="true">
          <path d="M2 1v14" stroke="#fff" strokeWidth="1.400" />
          <path d="M3.500 2c3-1 4 1 8 0v7c-4 1-5-1-8 0z" fill="#fff" />
          <circle cx="12" cy="10.500" r="5" fill="#d2503c" />
          <path d="m9.800 8.300 4.400 4.400M14.200 8.300l-4.400 4.400" stroke="#fff" strokeWidth="1.400" />
        </svg>
        <div className="w-[84px] text-center font-['Open_Sans',sans-serif] text-[11px] leading-[17px]">
          <p>1:01 AM</p>
          <p>9/30/2018</p>
        </div>
      </div>
    </footer>
  );
}

export default function App() {
  return (
    <div className={`flex h-screen flex-col overflow-hidden bg-[#5fb9b2] text-[11px] ${UI}`}>
      <TitleBar />
      <main className="mx-[9px] mb-[7px] flex min-h-0 flex-1 flex-col overflow-hidden">
        <InfoBar />
        <div className="flex min-h-0 flex-1">
          <div className="flex min-w-0 flex-1 flex-col">
            <NodeCanvas />
            <NodeHeader />
            <Timeline />
            <TimelineHeader />
          </div>
          <aside className="flex w-[350px] shrink-0 flex-col border-l border-black">
            <Outliner />
            <Properties />
          </aside>
        </div>
      </main>
      <Taskbar />
    </div>
  );
}
